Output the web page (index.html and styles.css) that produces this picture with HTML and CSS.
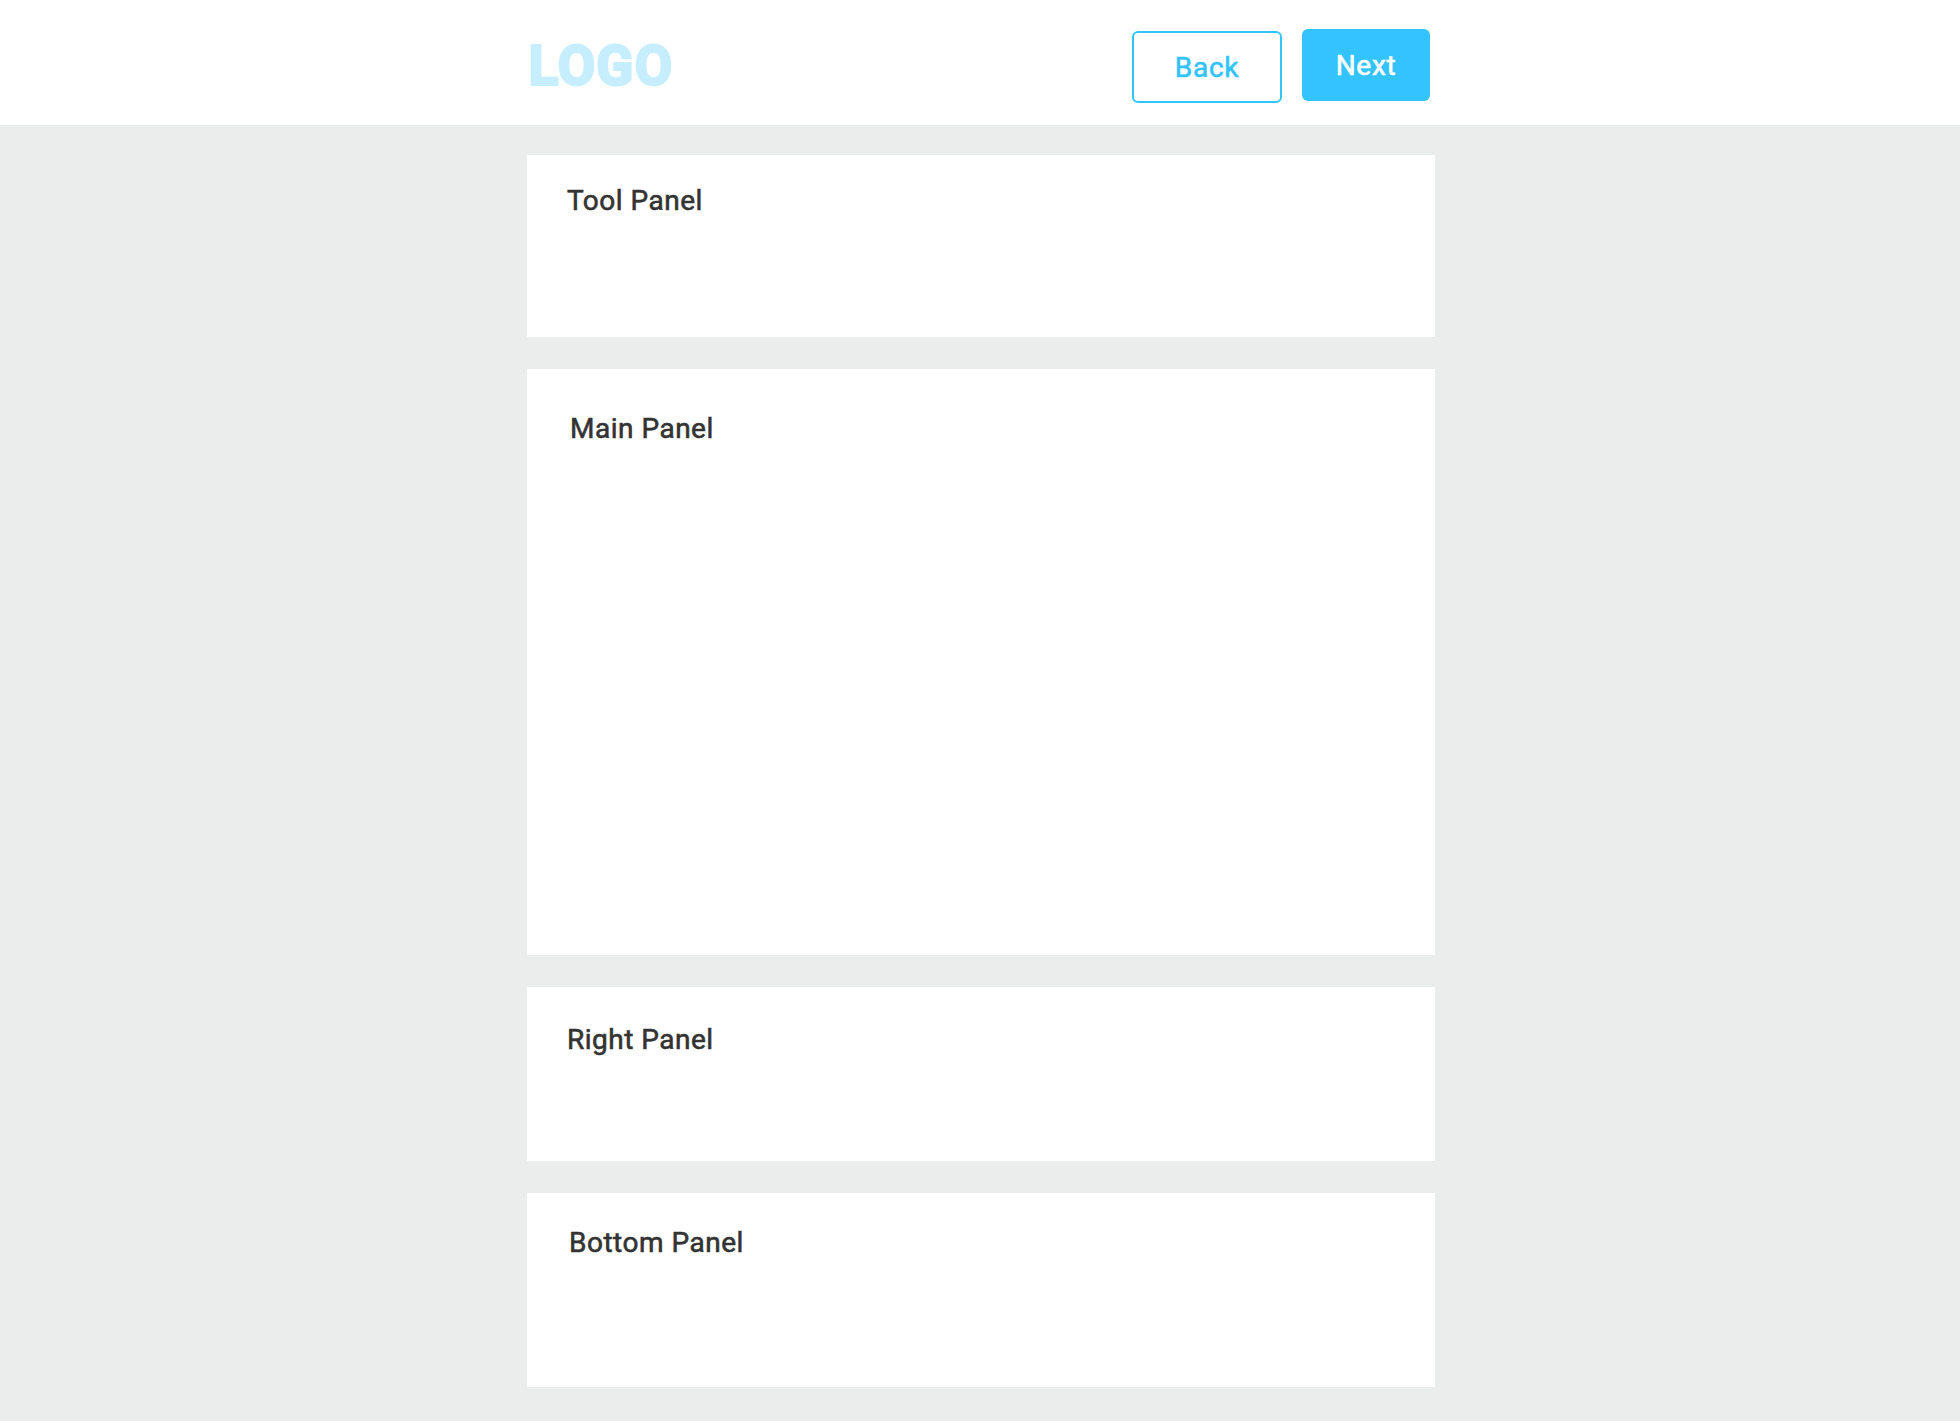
FILE: index.html
```html
<!DOCTYPE html>
<html lang="en">
<head>
  <meta charset="UTF-8">
  <title>Panels</title>
  <link rel="stylesheet" href="styles.css">
</head>
<body>
  <header class="header">
    <div class="header-inner">
      <div class="logo">LOGO</div>
      <div class="actions">
        <button class="btn btn-back">Back</button>
        <button class="btn btn-next">Next</button>
      </div>
    </div>
  </header>

  <main class="content">
    <section class="panel panel-tool"><h2>Tool Panel</h2></section>
    <section class="panel panel-main"><h2>Main Panel</h2></section>
    <section class="panel panel-right"><h2>Right Panel</h2></section>
    <section class="panel panel-bottom"><h2>Bottom Panel</h2></section>
  </main>
</body>
</html>
```
FILE: styles.css
```css
* {
  box-sizing: border-box;
}

body {
  margin: 0;
  font-family: Roboto, sans-serif;
  background: #ebeded;
}

.header {
  height: 125px;
  background: white;
}

.header-inner {
  width: 908px;
  margin-left: 527px;
  display: flex;
  justify-content: space-between;
  padding: 29px 5px 0 2px;
}

.logo {
  font-size: 53px;
  font-weight: 500;
  line-height: 74px;
  letter-spacing: 2.2px;
  color: #c6eeff;
  -webkit-text-stroke: 4px #c6eeff;
}

.actions {
  display: flex;
  align-items: flex-start;
  gap: 20px;
}

.btn {
  height: 72px;
  border-radius: 6px;
  font-family: Roboto, sans-serif;
  font-size: 28px;
  font-weight: 400;
  letter-spacing: 0.7px;
  -webkit-text-stroke: 0.6px;
  cursor: pointer;
}

.btn-back {
  width: 150px;
  margin-top: 2px;
  background: white;
  color: #33c3ff;
  border: 2px solid #33c3ff;
}

.btn-next {
  width: 128px;
  background: #33c3ff;
  color: white;
  border: none;
}

.content {
  width: 908px;
  margin-left: 527px;
  padding: 30px 0 34px;
  display: flex;
  flex-direction: column;
  gap: 32px;
}

.panel {
  background: white;
}

.panel h2 {
  margin: 0;
  font-size: 28px;
  font-weight: 400;
  line-height: 34px;
  letter-spacing: 0.5px;
  -webkit-text-stroke: 0.6px;
  color: #333;
}

.panel-tool {
  height: 182px;
  padding: 29px 40px;
}

.panel-main {
  height: 586px;
  padding: 43px 43px;
}

.panel-right {
  height: 174px;
  padding: 36px 40px;
}

.panel-bottom {
  height: 194px;
  padding: 33px 42px;
}
```
